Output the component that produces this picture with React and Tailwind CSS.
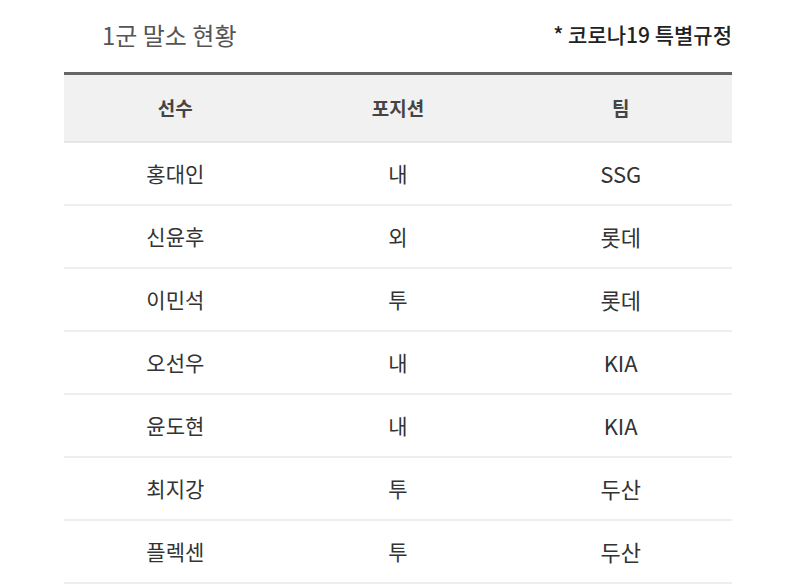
import React from "react";

const rows = [
  ["홍대인", "내", "SSG"],
  ["신윤후", "외", "롯데"],
  ["이민석", "투", "롯데"],
  ["오선우", "내", "KIA"],
  ["윤도현", "내", "KIA"],
  ["최지강", "투", "두산"],
  ["플렉센", "투", "두산"],
];

const App = () => {
  return (
    <div className="w-[800px] h-[586px] overflow-hidden bg-white font-['Noto_Sans_CJK_KR',sans-serif]">
      <div className="ml-[64px] w-[668px]">
        <div className="flex items-center justify-between h-[72px] pb-[2px]">
          <p className="pl-[38px] text-[24px] text-[#555]">1군 말소 현황</p>
          <p className="text-[21px] font-medium text-[#222]">* 코로나19 특별규정</p>
        </div>
        <div className="border-t-[3px] border-[#666]">
          <div className="grid grid-cols-3 h-[68px] items-center bg-[#f1f1f1] border-b-2 border-[#e6e6e6] text-[19px] font-bold text-[#444] text-center">
            <span>선수</span>
            <span>포지션</span>
            <span>팀</span>
          </div>
          {rows.map((r) => (
            <div
              key={r[0]}
              className="grid grid-cols-3 h-[63px] items-center border-b-2 border-[#eeeeee] text-[21px] text-[#333] text-center"
            >
              <span>{r[0]}</span>
              <span>{r[1]}</span>
              <span className="text-[22px]">{r[2]}</span>
            </div>
          ))}
        </div>
      </div>
    </div>
  );
};

export default App;
